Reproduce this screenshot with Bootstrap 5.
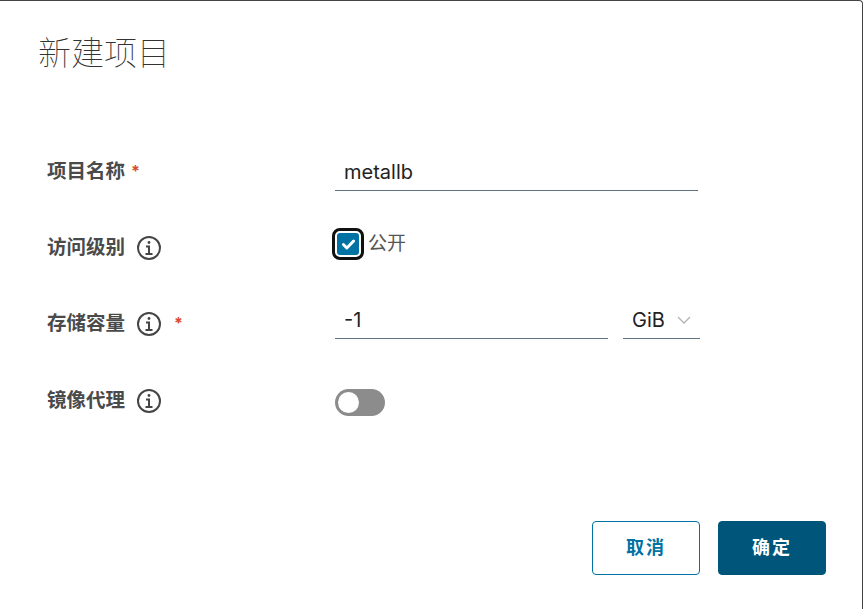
<!DOCTYPE html>
<html lang="en">
<head>
<meta charset="UTF-8">
<title>新建项目</title>
<link href="https://cdn.jsdelivr.net/npm/bootstrap@5.3.0/dist/css/bootstrap.min.css" rel="stylesheet">
<style>
html, body { height: 100%; }
body { margin: 0; background: #fff; overflow: hidden; font-family: Inter, "Noto Sans CJK SC", sans-serif; color: #454545; }
.dlg { height: 609px; border-top: 1px solid #444; border-right: 1px solid #444; border-top-right-radius: 4px; padding: 31px 36px 34px 38px; }
.dlg-title { font-size: 33px; line-height: 39px; font-weight: 100; color: #333; margin: 0 0 82px; font-family: "Noto Sans CJK SC", sans-serif; }
.form-line { padding-left: 9px; }
.line-a { height: 74px; }
.line-b { height: 79px; }
.lbl-col { width: 288px; font-size: 19.5px; line-height: 26px; font-weight: 700; color: #4a4a4a; }
.pad-a { padding-top: 5px; }
.pad-b { padding-top: 7px; }
.pad-c { padding-top: 9px; }
.req { color: #d9482b; font-size: 16px; line-height: 26px; font-weight: 700; }
.req-near { margin-left: 6px; }
.req-far { margin-left: 12px; }
.info-ic { width: 26px; height: 26px; margin: 1px 0 0 11px; flex: none; }
.val-col { width: 365px; }
.txt-in { border: 0; border-bottom: 1px solid #5f7480; border-radius: 0; padding: 0 9px; height: 38px; font-size: 20px; color: #222; background: transparent; outline: none; box-shadow: none; width: 100%; display: block; }
.txt-short { width: 363px; }
.unit-sel { width: 77px; height: 38px; flex: none; margin-left: 15px; border-bottom: 1px solid #5f7480; font-size: 20px; color: #222; padding-left: 9px; gap: 12px; }
.chk-box { width: 26px; height: 26px; margin-top: 4px; background: #0072a3; border-radius: 5px; border: 2px solid #fff; outline: 3px solid #111; flex: none; }
.chk-lbl { font-size: 19px; line-height: 26px; color: #565656; margin-left: 7px; margin-top: 4px; }
.tog { width: 50px; height: 27px; margin-top: 9px; border-radius: 14px; background: #8c8c8c; position: relative; }
.tog::after { content: ""; position: absolute; left: 3px; top: 3px; width: 21px; height: 21px; border-radius: 50%; background: #fff; }
.act-btn { width: 108px; height: 54px; font-size: 18px; line-height: 52px; font-weight: 700; letter-spacing: 2px; border-radius: 4px; padding: 0; }
.btn-out { background: #fff; border: 1px solid #0072a3; color: #0072a3; }
.btn-fill { background: #00567a; border: 1px solid #00567a; color: #fff; }
.btn-gap { gap: 18px; }
</style>
</head>
<body>
<div class="dlg d-flex flex-column">
  <h1 class="dlg-title">新建项目</h1>

  <form class="flex-grow-1 d-flex flex-column">
    <div class="form-line line-a d-flex">
      <div class="lbl-col pad-a d-flex align-items-start"><span>项目名称</span><span class="req req-near">*</span></div>
      <div class="val-col"><input class="txt-in txt-short" value="metallb"></div>
    </div>
    <div class="form-line line-a d-flex">
      <div class="lbl-col pad-b d-flex align-items-start">
        <span>访问级别</span>
        <svg class="info-ic" viewBox="0 0 26 26" fill="none" stroke="#454545" stroke-width="2"><circle cx="13" cy="13" r="11"/><path d="M9.5 19h7M13 19v-7.5h-3"/><circle cx="13" cy="7.5" r="1.4" fill="#454545" stroke="none"/></svg>
      </div>
      <div class="val-col d-flex align-items-start">
        <div class="chk-box d-flex align-items-center justify-content-center">
          <svg width="15" height="13" viewBox="0 0 16 14" fill="none" stroke="#fff" stroke-width="3.2" stroke-linecap="round" stroke-linejoin="round"><path d="M2.5 7l3.7 3.7 7.3-7.4"/></svg>
        </div>
        <span class="chk-lbl">公开</span>
      </div>
    </div>
    <div class="form-line line-b d-flex">
      <div class="lbl-col pad-c d-flex align-items-start">
        <span>存储容量</span>
        <svg class="info-ic" viewBox="0 0 26 26" fill="none" stroke="#454545" stroke-width="2"><circle cx="13" cy="13" r="11"/><path d="M9.5 19h7M13 19v-7.5h-3"/><circle cx="13" cy="7.5" r="1.4" fill="#454545" stroke="none"/></svg>
        <span class="req req-far">*</span>
      </div>
      <div class="val-col d-flex">
        <input class="txt-in" value="-1">
        <div class="unit-sel d-flex align-items-center">GiB
          <svg width="14" height="8" viewBox="0 0 14 8" fill="none" stroke="#b3b3b3" stroke-width="1.3"><path d="M1 1l6 6 6-6"/></svg>
        </div>
      </div>
    </div>
    <div class="form-line d-flex">
      <div class="lbl-col pad-b d-flex align-items-start">
        <span>镜像代理</span>
        <svg class="info-ic" viewBox="0 0 26 26" fill="none" stroke="#454545" stroke-width="2"><circle cx="13" cy="13" r="11"/><path d="M9.5 19h7M13 19v-7.5h-3"/><circle cx="13" cy="7.5" r="1.4" fill="#454545" stroke="none"/></svg>
      </div>
      <div class="val-col"><div class="tog"></div></div>
    </div>
    <div class="d-flex justify-content-end btn-gap mt-auto">
      <button type="button" class="btn act-btn btn-out">取消</button>
      <button type="button" class="btn act-btn btn-fill">确定</button>
    </div>
  </form>
</div>
<script src="https://cdn.jsdelivr.net/npm/bootstrap@5.3.0/dist/js/bootstrap.bundle.min.js"></script>
</body>
</html>
